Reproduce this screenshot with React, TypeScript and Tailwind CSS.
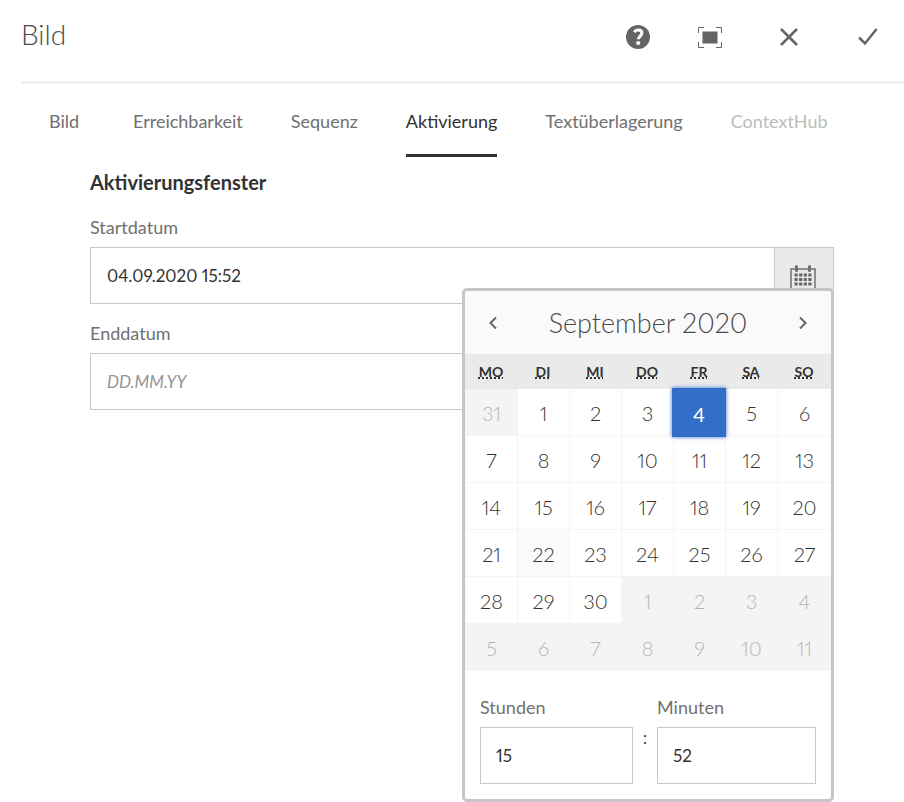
import { useState } from "react";
import type { ReactNode } from "react";
import clsx from "clsx";

const tabs = ["Bild", "Erreichbarkeit", "Sequenz", "Aktivierung", "Textüberlagerung", "ContextHub"];

const weekdays = [
  ["MO", "Montag"],
  ["DI", "Dienstag"],
  ["MI", "Mittwoch"],
  ["DO", "Donnerstag"],
  ["FR", "Freitag"],
  ["SA", "Samstag"],
  ["SO", "Sonntag"],
];

const weeks = [
  [31, 1, 2, 3, 4, 5, 6],
  [7, 8, 9, 10, 11, 12, 13],
  [14, 15, 16, 17, 18, 19, 20],
  [21, 22, 23, 24, 25, 26, 27],
  [28, 29, 30, 1, 2, 3, 4],
  [5, 6, 7, 8, 9, 10, 11],
];

const TODAY = 22;

function isOutside(week: number, day: number) {
  return (week === 0 && day > 20) || (week > 3 && day < 15);
}

function IconButton({ label, children }: { label: string; children: ReactNode }) {
  return (
    <button type="button" aria-label={label} className="flex size-8 items-center justify-center text-[#656565]">
      {children}
    </button>
  );
}

function Header() {
  return (
    <header className="ml-[21px] flex h-[84px] items-start justify-between border-b-[3px] border-[#f0f0f0] pr-5 pt-[13px]">
      <h1 className="text-[28px] leading-[42px] font-light text-[#4b4b4b]">Bild</h1>
      <div className="flex gap-[47px] pt-2">
        <div className="flex gap-10">
          <IconButton label="Hilfe">
            <svg width="24" height="24" viewBox="0 0 24 24" aria-hidden="true">
              <circle cx="12" cy="12" r="12" fill="currentColor" />
              <path d="M8.400 7.200C9.300 5.500 10.600 5 12.300 5c2.100 0 3.600 1.200 3.600 3.100 0 2.800-3.500 3.100-3.500 6.200" fill="none" stroke="#fff" strokeWidth="3" />
              <circle cx="12.200" cy="18" r="2.100" fill="#fff" />
            </svg>
          </IconButton>
          <IconButton label="Vollbild">
            <svg width="24" height="21" viewBox="0 0 24 21" aria-hidden="true">
              <rect x="4.500" y="4.500" width="15" height="12" fill="currentColor" />
              <path d="M.5 6V.5H6M18 .5h5.500V6M23.500 15v5.500H18M6 20.500H.5V15" fill="none" stroke="currentColor" />
            </svg>
          </IconButton>
        </div>
        <IconButton label="Schließen">
          <svg width="18" height="18" viewBox="0 0 18 18" aria-hidden="true">
            <path d="M1 1l16 16M17 1L1 17" fill="none" stroke="currentColor" strokeWidth="2.600" />
          </svg>
        </IconButton>
        <IconButton label="Fertig">
          <svg width="20" height="18" viewBox="0 0 20 18" aria-hidden="true">
            <path d="M1 9.500L7 15.500L18.600 1" fill="none" stroke="currentColor" strokeWidth="2.500" />
          </svg>
        </IconButton>
      </div>
    </header>
  );
}

function Tabs() {
  return (
    <div role="tablist" className="flex h-[73px] gap-12 pl-[49px]">
      {tabs.map((tab) => (
        <button
          key={tab}
          type="button"
          role="tab"
          aria-selected={tab === "Aktivierung"}
          disabled={tab === "ContextHub"}
          className={clsx(
            "min-w-9 border-b-[3px] pt-1 text-left text-[18px] leading-6",
            tab === "Aktivierung" ? "border-[#323232] text-[#323232]" : "border-transparent",
            tab === "ContextHub" && "text-[#bcbcbc]",
            tab !== "Aktivierung" && tab !== "ContextHub" && "text-[#707070]",
          )}
        >
          {tab}
        </button>
      ))}
    </div>
  );
}

function CalendarIcon() {
  return (
    <svg width="26" height="26" viewBox="0 0 26 26" aria-hidden="true">
      <path d="M1 4h24v21H1z" fill="none" stroke="#707070" strokeWidth="1.500" />
      <path d="M6.500 1.500v4M19.500 1.500v4" stroke="#707070" strokeWidth="3" strokeLinecap="round" />
      <path d="M4.500 10h17M4.500 14.500h17M4.500 19h17" stroke="#656565" strokeWidth="3.200" strokeDasharray="3.200 1.400" />
    </svg>
  );
}

function Chevron({ d }: { d: string }) {
  return (
    <svg width="8" height="14" viewBox="0 0 8 14" aria-hidden="true">
      <path d={d} fill="none" stroke="#656565" strokeWidth="2" />
    </svg>
  );
}

function DatePopover() {
  const [selected, setSelected] = useState(4);
  return (
    <div className="absolute top-[41px] right-0 w-[372px] rounded-[5px] border-[3px] border-[#c6c6c6] bg-white">
      <div className="flex h-[63px] items-center justify-between rounded-t-sm bg-[#fafafa] px-3">
        <button type="button" aria-label="Vorheriger Monat" className="flex size-8 items-center justify-center">
          <Chevron d="M7 1.500L1.500 7L7 12.500" />
        </button>
        <h2 className="text-[27px] leading-8 font-light text-[#4b4b4b] proportional-nums">September 2020</h2>
        <button type="button" aria-label="Nächster Monat" className="flex size-8 items-center justify-center">
          <Chevron d="M1 1.500L6.500 7L1 12.500" />
        </button>
      </div>
      <table className="w-full table-fixed border-separate border-spacing-0 text-center">
        <colgroup>
          <col span={6} className="w-[52px]" />
          <col />
        </colgroup>
        <thead>
          <tr className="h-[35px] bg-[#eaeaea] text-[14px] text-[#323232]">
            {weekdays.map(([short, long]) => (
              <th key={short} scope="col" className="p-0 font-bold">
                <abbr title={long} className="underline-offset-1 decoration-2 [text-decoration-skip-ink:none]">
                  {short}
                </abbr>
              </th>
            ))}
          </tr>
        </thead>
        <tbody>
          {weeks.map((days, week) => (
            <tr key={week} className="h-[47px]">
              {days.map((day) => {
                const outside = isOutside(week, day);
                const active = !outside && day === selected;
                return (
                  <td
                    key={day}
                    className={clsx(
                      "relative border-b border-l border-[#f4f4f4] p-0",
                      outside && "bg-[#f4f4f4]",
                      !outside && day === TODAY && "bg-[#fafafa]",
                    )}
                  >
                    <button
                      type="button"
                      disabled={outside}
                      onClick={() => setSelected(day)}
                      className={clsx(
                        "pt-0.5 text-[20px] leading-6 proportional-nums",
                        active
                          ? "absolute -top-px -right-px -bottom-0.5 -left-0.5 z-10 bg-[#326ec8] text-white shadow-[0_0_4px_#326ec8]"
                          : "h-full w-full font-light",
                        outside && "text-[#b4b4b4]",
                        !outside && !active && "text-[#323232]",
                      )}
                    >
                      {day}
                    </button>
                  </td>
                );
              })}
            </tr>
          ))}
        </tbody>
      </table>
      <div className="flex px-[15px] pt-6 pb-[15px]">
        <label className="flex w-[153px] flex-col gap-2 text-[18px] leading-6 text-[#707070]">
          Stunden
          <input defaultValue="15" className="h-[57px] w-full border border-[#c8c8c8] px-[15px] text-[17px] text-[#323232] proportional-nums" />
        </label>
        <span className="w-6 pt-[30px] text-center text-[18px] leading-6 text-[#4b4b4b]">:</span>
        <label className="flex flex-1 flex-col gap-2 text-[18px] leading-6 text-[#707070]">
          Minuten
          <input defaultValue="52" className="h-[57px] w-full border border-[#c8c8c8] px-[15px] text-[17px] text-[#323232] proportional-nums" />
        </label>
      </div>
    </div>
  );
}

export default function App() {
  return (
    <div className="min-h-screen bg-white font-['Lato',sans-serif] text-[18px] leading-6">
      <Header />
      <Tabs />
      <main className="pr-[70px] pl-[90px] pt-[13px]">
        <h2 className="text-[20px] leading-6 font-bold text-[#323232]">Aktivierungsfenster</h2>
        <label htmlFor="start" className="mt-[21px] block text-[#707070]">
          Startdatum
        </label>
        <div className="relative mt-2 flex h-[57px]">
          <input
            id="start"
            defaultValue="04.09.2020 15:52"
            className="min-w-0 flex-1 border border-[#c8c8c8] px-4 text-[17px] text-[#323232] proportional-nums"
          />
          <button
            type="button"
            aria-label="Kalender öffnen"
            className="flex w-[59px] items-center justify-center border border-l-0 border-[#c8c8c8] bg-[#eaeaea] pt-1 pr-0.5"
          >
            <CalendarIcon />
          </button>
          <DatePopover />
        </div>
        <label htmlFor="end" className="mt-[17px] block text-[#707070]">
          Enddatum
        </label>
        <input
          id="end"
          placeholder="DD.MM.YY"
          className="mt-2 h-[57px] w-full border border-[#c8c8c8] px-4 text-[17px] text-[#323232] placeholder:text-[#959595] placeholder:italic"
        />
      </main>
    </div>
  );
}
